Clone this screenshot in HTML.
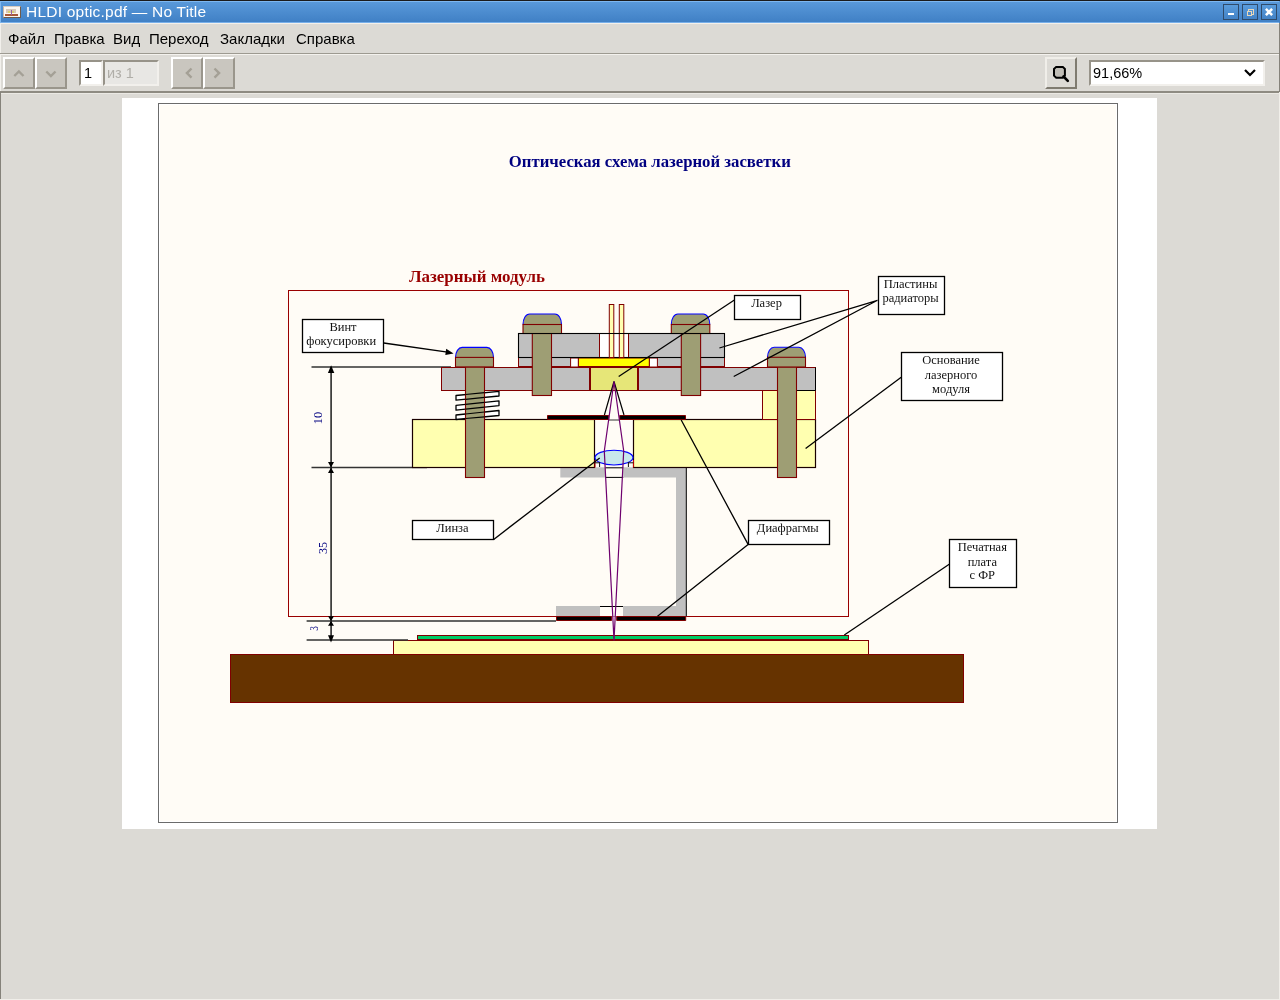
<!DOCTYPE html>
<html><head><meta charset="utf-8">
<style>
html,body{-webkit-font-smoothing:antialiased;margin:0;padding:0;width:1280px;height:1000px;overflow:hidden;background:#dcdad5;font-family:"Liberation Sans",sans-serif;}
.a{position:absolute;}
#tb{left:0;top:0;width:1280px;height:23px;background:linear-gradient(#5b9bdc,#3f7fc4);}
#tbtop{left:0;top:0;width:1280px;height:1px;background:#1b1b1b;}
#tbl1{left:0;top:1px;width:1279px;height:1px;background:#7db7f0;}
#tbl2{left:0;top:22px;width:1279px;height:1px;background:#78b0ea;}
#tbl3{left:0;top:1px;width:1px;height:22px;background:#7db7f0;}
#tbr{left:1279px;top:23px;width:1px;height:69px;background:#85827a;}
#rside{left:1279px;top:92px;width:1px;height:908px;background:#f0eee9;}
#lside2{left:0;top:92px;width:1px;height:907px;background:#85827a;}
#bside{left:0;top:999px;width:1280px;height:1px;background:#f0eee9;}
#title{will-change:transform;left:26px;top:2px;color:#fff;font-size:15.5px;letter-spacing:0.22px;line-height:19px;white-space:nowrap;}
.wb{top:4px;width:14px;height:14px;border:1px solid #2f4b6b;background:linear-gradient(#5a9cdc,#4282c6);}
#menu{left:0;top:23px;width:1279px;height:30px;background:#dcdad5;border-top:1px solid #f4f0ea;box-sizing:border-box;}
.mi{will-change:transform;top:30px;font-size:15px;color:#000;white-space:nowrap;line-height:17px;}
#sep1{left:0;top:53px;width:1279px;height:1px;background:#9d9a91;}
#sep1b{left:0;top:54px;width:1279px;height:1px;background:#f4f2ee;}
#sep2{left:0;top:91px;width:1279px;height:2px;background:#8e8b82;}
#sep2b{left:0;top:93px;width:1279px;height:1px;background:#ebe9e4;}
.btn{top:57px;width:32px;height:32px;box-sizing:border-box;background:#c9c6bf;border-left:2px solid #fff;border-top:2px solid #fff;border-right:2px solid #9a968c;border-bottom:2px solid #9a968c;}
.fld{top:60px;height:26px;box-sizing:border-box;border-left:2px solid #979389;border-top:2px solid #979389;border-right:2px solid #f2f0ec;border-bottom:2px solid #f2f0ec;font-size:14px;line-height:22px;white-space:nowrap;}
.txt{will-change:transform;font-size:14.5px;line-height:22px;white-space:nowrap;}
#lside{left:0;top:23px;width:1px;height:69px;background:#f2f0ec;}
</style></head><body>
<div class="a" id="tb"></div>
<div class="a" id="tbtop"></div>
<div class="a" id="tbl1"></div>
<div class="a" id="tbl2"></div>
<div class="a" id="tbl3"></div>
<!-- app icon -->
<div class="a" style="left:3px;top:6px;width:18px;height:12px;background:#fbf6f0;border-right:1px solid #6e5a4a;border-bottom:1px solid #6e5a4a;border-left:1px solid #c8b8a8;border-top:1px solid #d8ccc0;box-sizing:border-box;"></div>
<div class="a" style="left:5px;top:14px;width:13px;height:2px;background:#a8583a;"></div>
<div class="a" style="left:6px;top:9px;width:10px;height:4px;background:#d8c8b8;"></div>
<div class="a" style="left:8px;top:11px;width:2px;height:2px;background:#d8d070;"></div>
<div class="a" style="left:12px;top:11px;width:2px;height:2px;background:#d8d070;"></div>
<div class="a" style="left:11px;top:10px;width:1px;height:5px;background:#9a60a0;"></div>
<div class="a" id="title">HLDI optic.pdf — No Title</div>
<div class="a wb" style="left:1223px;"></div>
<div class="a wb" style="left:1242px;"></div>
<div class="a wb" style="left:1261px;"></div>
<div class="a" style="left:1228px;top:13px;width:6px;height:2px;background:#fff;"></div>
<div class="a" style="left:1248px;top:9px;width:4px;height:4px;border:1px solid #e8d8b8;"></div>
<div class="a" style="left:1247px;top:11px;width:3px;height:3px;border:1px solid #e8d8b8;background:#4a8ad0;"></div>
<svg class="a" style="left:1265px;top:8px" width="8" height="8" viewBox="0 0 8 8"><path d="M1.8 1.8L6.2 6.2M6.2 1.8L1.8 6.2" stroke="#fff" stroke-width="2.6" stroke-linecap="square"/></svg>

<div class="a" id="menu"></div>
<div class="a" id="lside"></div>
<div class="a mi" style="left:8px;">Файл</div>
<div class="a mi" style="left:54px;">Правка</div>
<div class="a mi" style="left:113px;">Вид</div>
<div class="a mi" style="left:149px;">Переход</div>
<div class="a mi" style="left:220px;">Закладки</div>
<div class="a mi" style="left:296px;">Справка</div>
<div class="a" id="sep1"></div>
<div class="a" id="sep1b"></div>

<!-- toolbar -->
<div class="a btn" style="left:3px;"></div>
<div class="a btn" style="left:35px;"></div>
<div class="a btn" style="left:171px;"></div>
<div class="a btn" style="left:203px;"></div>
<svg class="a" style="left:0;top:54px" width="240" height="38">
 <path d="M14.3 22l4.6-4.6 4.6 4.6" fill="none" stroke="#a4a096" stroke-width="2.4"/>
 <path d="M46.3 17.5l4.6 4.6 4.6-4.6" fill="none" stroke="#a4a096" stroke-width="2.4"/>
 <path d="M191.5 14.5l-4.6 4.6 4.6 4.6" fill="none" stroke="#a4a096" stroke-width="2.4"/>
 <path d="M214.5 14.5l4.6 4.6-4.6 4.6" fill="none" stroke="#a4a096" stroke-width="2.4"/>
</svg>
<div class="a fld" style="left:79px;width:24px;background:#fff;"></div><div class="a txt" style="left:84px;top:62px;color:#000;">1</div>
<div class="a fld" style="left:103px;width:56px;background:#e8e7e4;"></div><div class="a txt" style="left:107px;top:62px;color:#b0aea8;">из 1</div>
<div class="a btn" style="left:1045px;background:#dcdad5;border-left-color:#f0eee9;border-top-color:#f0eee9;border-right-color:#7f7b70;border-bottom-color:#7f7b70;"></div>
<svg class="a" style="left:1044px;top:56px" width="34" height="34">
 <path d="M12.2 10.9H18.8L20.9 13V19.6L18.8 21.7H12.2L10 19.6V13Z" fill="#c0bdb6" stroke="#000" stroke-width="2"/>
 <path d="M19.5 20.5l4.3 4.3" stroke="#000" stroke-width="2.6" stroke-linecap="round"/>
</svg>
<div class="a fld" style="left:1089px;width:176px;background:#fff;"></div><div class="a txt" style="left:1093px;top:62px;color:#000;">91,66%</div>
<svg class="a" style="left:1240px;top:64px" width="20" height="18"><path d="M5 6l5 5 5-5" fill="none" stroke="#000" stroke-width="2.2"/></svg>
<div class="a" id="sep2"></div>
<div class="a" id="sep2b"></div>
<div class="a" id="tbr"></div><div class="a" id="rside"></div><div class="a" id="lside2"></div><div class="a" id="bside"></div>

<!-- PAGE -->
<svg class="a" style="left:0;top:0;will-change:transform" width="1280" height="1000" viewBox="0 0 1280 1000" font-family="Liberation Serif">
 <rect x="122" y="98" width="1035" height="731" fill="#fff"/>
 <rect x="158.5" y="103.5" width="959" height="719" fill="#fff" stroke="#6b6b6b" stroke-width="1"/><rect x="160" y="105" width="956" height="716" fill="#fffcf6"/>
 <text x="508.8" y="167" font-size="17" font-weight="bold" fill="#000080" textLength="282" lengthAdjust="spacingAndGlyphs">Оптическая схема лазерной засветки</text>
 <!--DIAGRAM-->
 <g id="diagram" stroke-linejoin="miter">
 <text x="409" y="282" font-size="16" font-weight="bold" fill="#990000" textLength="136" lengthAdjust="spacingAndGlyphs">Лазерный модуль</text>
 <rect x="288.5" y="290.5" width="560" height="326" fill="none" stroke="#990000" stroke-width="1"/>

 <!-- table / board / pcb -->
 <rect x="230.5" y="654.5" width="733" height="48" fill="#663300" stroke="#800000" stroke-width="1"/>
 <rect x="393.5" y="640.5" width="475" height="14" fill="#ffffb0" stroke="#800000" stroke-width="1"/>
 <rect x="417.5" y="635.5" width="431" height="4" fill="#00cc66" stroke="#800000" stroke-width="1"/>

 <!-- dimension lines -->
 <g stroke="#333" stroke-width="1.4" fill="none">
  <path d="M311.5 367H451M311.5 467.5H427M306.6 621H556M306.6 640H408"/><path d="M331.1 367V640" stroke="#2a2a2a" stroke-width="1.6"/>
 </g>
 <g fill="#000">
  <path d="M331.1 365.3l-3.2 7.6h6.4z"/>
  <path d="M331 467.5l-3 -5.5h6zM331 467.5l-3 5.5h6z"/>
  <path d="M331 621l-3 -4.8h6zM331 621l-3 4.8h6z"/>
  <path d="M331 642.5l-3 -7.3h6z"/>
 </g>
 <g fill="#000080" font-size="12">
  <text transform="translate(322.2,424.2) rotate(-90)" font-size="12.5">10</text>
  <text transform="translate(327,554) rotate(-90)">35</text>
  <text transform="translate(318.2,630.7) rotate(-90) scale(0.8,1)" font-size="11.5">3</text>
 </g>

 <!-- lens holder -->
 <g fill="#c0c0c0">
  <rect x="560.3" y="467.3" width="126" height="10.2"/>
  <rect x="676" y="467.3" width="10.3" height="149"/>
  <rect x="556" y="606" width="130.3" height="10.3"/>
 </g>
 <rect x="605.4" y="467.3" width="17.8" height="10" fill="#fffcf6"/>
 <rect x="600" y="606.5" width="23" height="10" fill="#fffcf6"/>
 <path d="M605.4 467.8H623.2M605.4 477.4H623.2M600 606.5H623M686.3 467.3V616.3" stroke="#000" stroke-width="1" fill="none"/>

 <!-- base -->
 <rect x="412.5" y="419.5" width="182" height="48" fill="#ffffb0" stroke="#1a0000" stroke-width="1.2"/>
 <rect x="633.5" y="419.5" width="182" height="48" fill="#ffffb0" stroke="#1a0000" stroke-width="1.2"/>
 <path d="M595 460V467.5M633.5 460V467.5" stroke="#cc0000" stroke-width="1"/>
 <!-- right spacer -->
 <rect x="762.5" y="390.5" width="53" height="29" fill="#ffffb0" stroke="#800000" stroke-width="1"/>

 <!-- springs fill -->
 <g fill="#fff" stroke="#000" stroke-width="1.3" stroke-linejoin="round">
  <path d="M456 395.5L499 391.3V396L456 400.2Z"/>
  <path d="M456 405.4L499 400.8V405.6L456 410.1Z"/>
  <path d="M456 415L499 410.5V415.5L456 419.5Z"/>
 </g>

 <!-- lower plate -->
 <rect x="441.5" y="367.5" width="374" height="23" fill="#c0c0c0" stroke="#800000" stroke-width="1"/>
 <path d="M797 390.5H815.5V367.5" stroke="#000" stroke-width="1" fill="none"/>
 <rect x="590.5" y="367.5" width="47" height="23" fill="#e6e678" stroke="#800000" stroke-width="1"/><path d="M590 367.5V390.5M638 367.5V390.5" stroke="#800000" stroke-width="2"/>

 <!-- upper plate lower layer -->
 <rect x="518.5" y="357.5" width="206" height="9" fill="#c0c0c0" stroke="#800000" stroke-width="1"/>
 <rect x="570.6" y="358" width="7.8" height="9" fill="#fff" stroke="#800000" stroke-width="1"/>
 <rect x="578.4" y="358" width="71" height="8.5" fill="#ffff00" stroke="#800000" stroke-width="1"/>
 <rect x="649.4" y="358" width="8" height="9" fill="#fff" stroke="#800000" stroke-width="1"/>
 <!-- upper plate top layer -->
 <rect x="518.5" y="333.5" width="206" height="24" fill="#c0c0c0" stroke="#000" stroke-width="1.1"/>
 <rect x="599" y="334.2" width="29.7" height="22.6" fill="#fff"/>
 <path d="M599.5 334V357.5M628.5 334V357.5" stroke="#800000" stroke-width="1"/>
 <path d="M518.5 357.5H724.5" stroke="#000" stroke-width="1.1"/>
 <!-- pins -->
 <rect x="609.3" y="304.5" width="4.5" height="53" fill="#ffffb0" stroke="#800000" stroke-width="1"/>
 <rect x="619.3" y="304.5" width="4.5" height="53" fill="#ffffb0" stroke="#800000" stroke-width="1"/>

 <!-- screws -->
 <g stroke-width="1.1">
  <!-- screw 1 -->
  <rect x="465.5" y="367" width="19" height="110.5" fill="#9e9e74" stroke="#800000"/>
  <path d="M455.5 357.4A6.6 10.0 0 0 1 462.1 347.4H486.9A6.6 10.0 0 0 1 493.5 357.4Z" fill="#9e9e74" stroke="none"/>
  <path d="M455.5 357.4A6.6 10.0 0 0 1 462.1 347.4H486.9A6.6 10.0 0 0 1 493.5 357.4" fill="none" stroke="#0000ff"/>
  <rect x="455.5" y="357.4" width="38" height="9.5" fill="#9e9e74" stroke="#800000"/>
  <!-- screw 2 -->
  <rect x="532.3" y="333.5" width="19.2" height="62" fill="#9e9e74" stroke="#800000"/>
  <path d="M523 324.5A6.6 10.5 0 0 1 529.6 314H554.9A6.6 10.5 0 0 1 561.5 324.5Z" fill="#9e9e74" stroke="none"/>
  <path d="M523 324.5A6.6 10.5 0 0 1 529.6 314H554.9A6.6 10.5 0 0 1 561.5 324.5" fill="none" stroke="#0000ff"/>
  <rect x="523" y="324.5" width="38.5" height="9" fill="#9e9e74" stroke="#800000"/>
  <!-- screw 3 -->
  <rect x="681.3" y="333.5" width="19.3" height="62" fill="#9e9e74" stroke="#800000"/>
  <path d="M671.3 324.5A6.6 10.5 0 0 1 677.9 314H703.2A6.6 10.5 0 0 1 709.8 324.5Z" fill="#9e9e74" stroke="none"/>
  <path d="M671.3 324.5A6.6 10.5 0 0 1 677.9 314H703.2A6.6 10.5 0 0 1 709.8 324.5" fill="none" stroke="#0000ff"/>
  <rect x="671.3" y="324.5" width="38.5" height="9" fill="#9e9e74" stroke="#800000"/>
  <!-- screw 4 -->
  <rect x="777.5" y="367" width="19" height="110.5" fill="#9e9e74" stroke="#800000"/>
  <path d="M767.5 357.3A6.6 10.0 0 0 1 774.1 347.3H798.9A6.6 10.0 0 0 1 805.5 357.3Z" fill="#9e9e74" stroke="none"/>
  <path d="M767.5 357.3A6.6 10.0 0 0 1 774.1 347.3H798.9A6.6 10.0 0 0 1 805.5 357.3" fill="none" stroke="#0000ff"/>
  <rect x="767.5" y="357.3" width="38" height="9.7" fill="#9e9e74" stroke="#800000"/>
 </g>
 <path d="M518.5 333.5H724.5" stroke="#000" stroke-width="1"/>
 <!-- spring strokes over shaft -->
 <g fill="none" stroke="#000" stroke-width="1.2">
  <path d="M465.5 394.5L484.5 392.6M465.5 399.3L484.5 397.4"/>
  <path d="M465.5 404.4L484.5 402.4M465.5 409.1L484.5 407.2"/>
  <path d="M465.5 414L484.5 412M465.5 418.5L484.5 416.8"/>
 </g>

 <!-- diaphragms -->
 <path d="M547.5 415.5H608.7V419.5H547.5ZM619.7 415.5H685.5V419.5H619.7Z" fill="#000" stroke="#800000" stroke-width="1"/>
 <path d="M556.5 616.5H611.5V620.5H556.5ZM616.7 616.5H685.7V620.5H616.7Z" fill="#000" stroke="#800000" stroke-width="1"/>

 <path d="M608.7 420H619.7" stroke="#333" stroke-width="1"/>
 <!-- rays -->
 <path d="M614 381.5L604.4 415M614 381.5L624 415" stroke="#000" stroke-width="1.2" fill="none"/>
  <ellipse cx="614" cy="457.6" rx="19" ry="7.4" fill="#c8e8ec" stroke="#0000ff" stroke-width="1.1"/>
 <path d="M599.6 462V467M628.4 462V467M595 462.8H599.6M628.4 462.8H633.4" stroke="#111" stroke-width="1" fill="none"/>
 <path d="M614 381.5L604.3 451L614 640.5L623.7 451Z" stroke="#6e006e" stroke-width="1.2" fill="none"/>

 <!-- leader lines -->
 <g stroke="#000" stroke-width="1.3" fill="none">
  <path d="M383.7 343L447.5 352.2"/>
  <path d="M734.4 300L618.7 376.5"/>
  <path d="M877.5 300.3L719.4 348M877.5 300.3L733.7 376.5"/>
  <path d="M901.2 377.2L805.6 448.6"/>
  <path d="M493.7 539.4L599.7 458"/>
  <path d="M748.1 544.4L681.2 420M748.1 544.4L657.5 616.3"/>
  <path d="M949.2 564.3L844.3 635"/>
 </g>
 <path d="M453.6 353.4L446.2 348.8L445.3 354.9Z" fill="#000"/>

 <!-- label boxes -->
 <g fill="#fff" stroke="#000" stroke-width="1.3">
  <rect x="302.5" y="319.5" width="81" height="33"/>
  <rect x="734.5" y="295.5" width="66" height="24"/>
  <rect x="878.5" y="276.5" width="66" height="38"/>
  <rect x="901.5" y="352.5" width="101" height="48"/>
  <rect x="412.5" y="520.5" width="81" height="19"/>
  <rect x="748.5" y="520.5" width="81" height="24"/>
  <rect x="949.5" y="539.5" width="67" height="48"/>
 </g>
 <g fill="#111" font-size="13.2" text-anchor="middle">
  <text transform="translate(343.0,331.0) scale(0.947,1)">Винт</text>
  <text transform="translate(341.2,345.3) scale(0.947,1)">фокусировки</text>
  <text transform="translate(766.5,307.0) scale(0.947,1)">Лазер</text>
  <text transform="translate(910.5,288.0) scale(0.947,1)">Пластины</text>
  <text transform="translate(910.5,302.0) scale(0.947,1)">радиаторы</text>
  <text transform="translate(951.0,364.0) scale(0.947,1)">Основание</text>
  <text transform="translate(951.0,378.8) scale(0.947,1)">лазерного</text>
  <text transform="translate(951.0,392.6) scale(0.947,1)">модуля</text>
  <text transform="translate(452.4,532.0) scale(0.947,1)">Линза</text>
  <text transform="translate(787.8,532.0) scale(0.947,1)">Диафрагмы</text>
  <text transform="translate(982.3,551.0) scale(0.947,1)">Печатная</text>
  <text transform="translate(982.3,565.6) scale(0.947,1)">плата</text>
  <text transform="translate(982.3,579.3) scale(0.947,1)">с ФР</text>
 </g>
 </g>
</svg>
</body></html>
